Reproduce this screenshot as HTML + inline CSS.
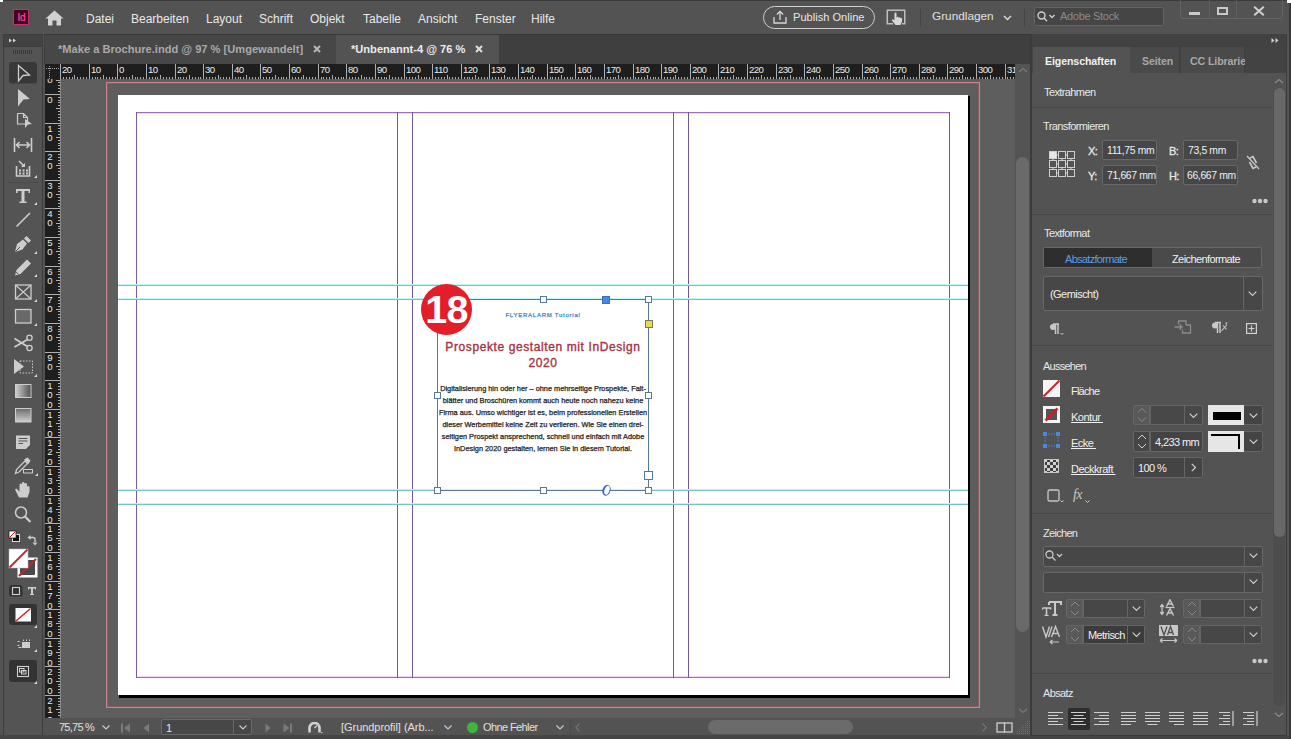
<!DOCTYPE html>
<html><head><meta charset="utf-8">
<style>
*{box-sizing:border-box;margin:0;padding:0}
html,body{width:1291px;height:739px;overflow:hidden;background:#535353;font-family:"Liberation Sans",sans-serif;color:#e0e0e0}
.a{position:absolute}
.t{position:absolute;white-space:nowrap;line-height:1}
.pt{font-size:11px;color:#e8e8e8;letter-spacing:-0.6px}
.mi{top:12.6px;font-size:12px;color:#e8e8e8;letter-spacing:0px}
</style></head><body>
<!-- MENU BAR -->
<div class="a" style="left:0;top:0;width:1291px;height:34px;background:#535353"></div>
<div class="a" style="left:0;top:0;width:1291px;height:1px;background:#3b3b3b"></div>


<!-- Id logo -->
<div class="a" style="left:13px;top:9px;width:16px;height:16px;background:#49021f;border:1px solid #b8386e"></div>
<div class="t" style="left:17.5px;top:12.5px;font-size:10px;color:#ff4aa6;letter-spacing:-0.2px;-webkit-text-stroke:0.2px #ff4aa6">Id</div>
<!-- home -->
<svg class="a" style="left:45px;top:10px" width="19" height="16" viewBox="0 0 19 16"><path d="M9.5 0.5 L0.5 8.5 L3 8.5 L3 15.5 L7.5 15.5 L7.5 10.5 L11.5 10.5 L11.5 15.5 L16 15.5 L16 8.5 L18.5 8.5 Z" fill="#d2d2d2"/></svg>
<div class="t mi" style="left:86px">Datei</div>
<div class="t mi" style="left:131px">Bearbeiten</div>
<div class="t mi" style="left:206px">Layout</div>
<div class="t mi" style="left:259px">Schrift</div>
<div class="t mi" style="left:310px">Objekt</div>
<div class="t mi" style="left:363px">Tabelle</div>
<div class="t mi" style="left:418px">Ansicht</div>
<div class="t mi" style="left:475px">Fenster</div>
<div class="t mi" style="left:531px">Hilfe</div>
<!-- publish online -->
<div class="a" style="left:763px;top:6px;width:112px;height:23px;border:1.5px solid #d0d0d0;border-radius:12px"></div>
<svg class="a" style="left:773px;top:10px" width="14" height="14" viewBox="0 0 14 14"><path d="M7 10 V1.5 M3.8 4.5 L7 1.3 L10.2 4.5 M1 7 V13 H13 V7" stroke="#d8d8d8" stroke-width="1.3" fill="none"/></svg>
<div class="t" style="left:793px;top:12px;font-size:11.1px;color:#e6e6e6">Publish Online</div>
<!-- touch icon -->
<svg class="a" style="left:886px;top:9px" width="20" height="16" viewBox="0 0 20 16"><path d="M7 14.75 H1.25 V1.25 H18.75 V14.75 H16" fill="none" stroke="#bdbdbd" stroke-width="1.5"/><path d="M8.5 4.5 A1 1 0 0 1 10.5 4.5 V9 L11 8 A1 1 0 0 1 12.5 8.5 L13 8.5 A1 1 0 0 1 14.5 9 A1 1 0 0 1 16 9.5 V12.5 L14.5 16 H9.5 L6 11.5 A1 1 0 0 1 7.5 10.5 L8.5 11.5 Z" fill="#d8d8d8"/></svg>
<div class="a" style="left:920px;top:9px;width:1px;height:18px;background:#454545"></div>
<div class="t" style="left:932px;top:11px;font-size:11.8px;color:#e0e0e0">Grundlagen</div>
<svg class="a" style="left:1003px;top:15px" width="9" height="6" viewBox="0 0 9 6"><path d="M1 1 L4.5 4.5 L8 1" stroke="#d8d8d8" stroke-width="1.5" fill="none"/></svg>
<div class="a" style="left:1024px;top:9px;width:1px;height:18px;background:#454545"></div>
<!-- search -->
<div class="a" style="left:1034px;top:7px;width:130px;height:19px;background:#454545;border:1px solid #626262;border-radius:2px"></div>
<svg class="a" style="left:1037px;top:11px" width="20" height="11" viewBox="0 0 20 11"><circle cx="4.5" cy="4.5" r="3.5" stroke="#cfcfcf" stroke-width="1.4" fill="none"/><path d="M7 7 L10 10.3 M12.5 4 L15 6.5 L17.5 4" stroke="#cfcfcf" stroke-width="1.4" fill="none"/></svg>
<div class="t" style="left:1060px;top:11px;font-size:11px;color:#8a8a8a;letter-spacing:-0.3px">Adobe Stock</div>
<!-- window controls -->
<div class="a" style="left:1180px;top:-2px;width:103px;height:21px;border:1px solid #646464;border-radius:3px"></div>
<div class="a" style="left:1209px;top:0;width:1px;height:19px;background:#5e5e5e"></div>
<div class="a" style="left:1236px;top:0;width:1px;height:19px;background:#5e5e5e"></div>
<div class="a" style="left:1189px;top:12px;width:11px;height:3px;background:#c8c8c8"></div>
<div class="a" style="left:1217px;top:7px;width:11px;height:8px;border:2px solid #c8c8c8"></div>
<svg class="a" style="left:1253px;top:6px" width="12" height="10" viewBox="0 0 12 10"><path d="M1.2 0.8 L10.8 9.2 M10.8 0.8 L1.2 9.2" stroke="#d0d0d0" stroke-width="2" fill="none"/></svg>


<!-- LEFT TOOL PANEL -->
<svg class="a" style="left:0;top:34px" width="44" height="702" viewBox="0 34 44 702">
<rect x="0" y="34" width="44" height="702" fill="#535353"/>
<rect x="3.5" y="34.5" width="39" height="701" fill="#545454" stroke="#3d3d3d"/>
<rect x="4" y="35" width="38" height="11" fill="#434343"/>
<rect x="4" y="46" width="38" height="1" fill="#3d3d3d"/>
<path d="M9 38.5 L12 40.5 L9 42.5Z M13 38.5 L16 40.5 L13 42.5Z" fill="#d0d0d0"/>
<path d="M13.5 50V54 M15.5 50V54 M17.5 50V54 M19.5 50V54 M21.5 50V54 M23.5 50V54 M25.5 50V54 M27.5 50V54 M29.5 50V54 M31.5 50V54" stroke="#3a3a3a" stroke-width="1"/>
<rect x="9" y="62" width="28" height="21.5" rx="3" fill="#383838"/>
<path d="M18.5 65.5 L29.5 75 L23 75.5 L18.5 81 Z" fill="none" stroke="#cdcdcd" stroke-width="1.3" stroke-linejoin="miter"/>
<path d="M18 89 L30 99 L23.5 99.5 L18 106.5 Z" fill="#cdcdcd"/>
<path d="M17.5 113.5 H23.5 L27.5 117.5 V121 M27.5 124 H17.5 V113.5 M23.5 113.5 V117.5 H27.5" fill="none" stroke="#cdcdcd" stroke-width="1.2"/><path d="M25 119 L32 124 L28 124.5 L25 128Z" fill="#cdcdcd"/>
<path d="M14.5 138 V152 M31.5 138 V152 M16.5 145 H29.5 M19.5 142 L16.5 145 L19.5 148 M26.5 142 L29.5 145 L26.5 148" fill="none" stroke="#cdcdcd" stroke-width="1.6"/>
<path d="M16.5 166 V176 H29.5 V166" fill="none" stroke="#cdcdcd" stroke-width="1.6"/><path d="M19 161 L24 166" stroke="#cdcdcd" stroke-width="1.6"/><path d="M25 167 L25 163 L21 167Z" fill="#cdcdcd"/><rect x="19" y="169.5" width="2" height="2" fill="#cdcdcd"/><rect x="22.5" y="169.5" width="2" height="2" fill="#cdcdcd"/><rect x="26" y="169.5" width="2" height="2" fill="#cdcdcd"/><rect x="19" y="172.5" width="2" height="2" fill="#cdcdcd"/><rect x="22.5" y="172.5" width="2" height="2" fill="#cdcdcd"/><rect x="26" y="172.5" width="2" height="2" fill="#cdcdcd"/>
<path d="M37 175 L37 178 L34 178 Z" fill="#d8d8d8"/>
<rect x="8" y="182" width="30" height="1" fill="#4a4a4a"/>
<path d="M16 189 H30 V193 H28.5 V191 H24.5 V201.5 H26.5 V203 H19.5 V201.5 H21.5 V191 H17.5 V193 H16Z" fill="#cdcdcd"/>
<path d="M37 202 L37 205 L34 205 Z" fill="#d8d8d8"/>
<path d="M16.5 226.5 L30 213" stroke="#cdcdcd" stroke-width="1.6"/>
<path d="M15 252 L17 244 L23 239.5 L27 243.5 L22.5 249.5 Z" fill="#cdcdcd"/><path d="M24 238.5 L26.5 236 L31 240.5 L28.5 243Z" fill="#cdcdcd"/><path d="M15.5 251.5 L20 247" stroke="#535353" stroke-width="1"/>
<path d="M37 251 L37 254 L34 254 Z" fill="#d8d8d8"/>
<path d="M15 275.5 L16.5 270 L27 259.5 L31 263.5 L20.5 274 Z" fill="#cdcdcd"/><path d="M16.2 272 L18.5 274.5" stroke="#535353" stroke-width="1"/>
<path d="M37 274 L37 277 L34 277 Z" fill="#d8d8d8"/>
<rect x="15.5" y="285" width="15.5" height="14" fill="none" stroke="#cdcdcd" stroke-width="1.3"/><path d="M15.5 285 L31 299 M31 285 L15.5 299" stroke="#cdcdcd" stroke-width="1.1"/>
<path d="M37 299 L37 302 L34 302 Z" fill="#d8d8d8"/>
<rect x="15.5" y="309.5" width="15.5" height="13.5" fill="#696969" stroke="#cdcdcd" stroke-width="1.3"/>
<path d="M37 323 L37 326 L34 326 Z" fill="#d8d8d8"/>
<circle cx="29.5" cy="337.8" r="2.6" fill="none" stroke="#cdcdcd" stroke-width="1.3"/><circle cx="29.5" cy="348" r="2.6" fill="none" stroke="#cdcdcd" stroke-width="1.3"/><path d="M14.5 338.5 Q20 342 27.5 346.5 M14.5 347 Q20 344 27.5 339.5" fill="none" stroke="#cdcdcd" stroke-width="1.8"/>
<path d="M14 359 L24 366.5 L14 374 Z" fill="#cdcdcd"/><rect x="20" y="361" width="12.5" height="12" fill="none" stroke="#cdcdcd" stroke-width="1" stroke-dasharray="1.5 1.5"/>
<path d="M37 374 L37 377 L34 377 Z" fill="#d8d8d8"/>
<defs><linearGradient id="g1" x1="0" x2="1" y1="0" y2="0"><stop offset="0" stop-color="#d0d0d0"/><stop offset="1" stop-color="#505050"/></linearGradient><linearGradient id="g2" x1="0" x2="0" y1="0" y2="1"><stop offset="0" stop-color="#6a6a6a"/><stop offset="1" stop-color="#d0d0d0"/></linearGradient></defs>
<rect x="15.5" y="384.5" width="15.5" height="13" fill="url(#g1)" stroke="#cdcdcd" stroke-width="1"/>
<rect x="15.5" y="408.5" width="15.5" height="13.5" fill="url(#g2)" stroke="#cdcdcd" stroke-width="1"/>
<path d="M16 435.5 H30 V445 L26 449 H16 Z" fill="#cdcdcd"/><path d="M18.5 438.5 H27.5 M18.5 441 H27.5 M18.5 443.5 H23" stroke="#535353" stroke-width="1"/><path d="M26.5 449 L30 445.5 V449Z" fill="#535353"/>
<path d="M15.5 473.5 L16.5 469.5 L25 461 L27.5 463.5 L19 472 Z" fill="none" stroke="#cdcdcd" stroke-width="1.3"/><path d="M24 459.5 L27.5 457.5 L30.5 460.5 L28.5 464 Z" fill="#cdcdcd"/><rect x="23.5" y="469.5" width="9" height="3.5" fill="none" stroke="#cdcdcd" stroke-width="1"/>
<path d="M38 473 L38 476 L35 476 Z" fill="#d8d8d8"/>
<path d="M19 497.5 L15 489.5 L16.5 488.5 L19.5 491.5 V484.5 A1.3 1.3 0 0 1 22 484.5 V489 V483 A1.3 1.3 0 0 1 24.5 483 V489 V484 A1.3 1.3 0 0 1 27 484 V490 V487 A1.3 1.3 0 0 1 29.5 487 V492 L27.5 497.5 Z" fill="#cdcdcd"/>
<circle cx="21" cy="512.5" r="5.5" fill="none" stroke="#cdcdcd" stroke-width="1.5"/><path d="M25 516.5 L30.5 522" stroke="#cdcdcd" stroke-width="2.2"/>
<rect x="12.5" y="534.5" width="7" height="7" fill="#111" stroke="#ddd" stroke-width="1"/><rect x="9" y="531" width="7" height="7" fill="#fff" stroke="#222" stroke-width="0.8"/><path d="M9.5 537.5 L15.5 531.5" stroke="#c82020" stroke-width="1"/>
<path d="M30 537.5 H33.5 Q35 537.5 35 539 V542" fill="none" stroke="#cdcdcd" stroke-width="1.4"/><path d="M27.5 537.5 L30.5 535 V540Z M35 545.5 L32.5 542.5 H37.5Z" fill="#cdcdcd"/>
<rect x="19" y="559" width="17" height="17" fill="none" stroke="#fff" stroke-width="3"/><rect x="20.5" y="560.5" width="14" height="14" fill="#4a4a4a" stroke="#222" stroke-width="0.6"/><path d="M19 576 L36 559" stroke="#c8202a" stroke-width="2.2"/>
<rect x="9" y="549" width="19" height="19" fill="#fff" stroke="#bbb" stroke-width="0.5"/><path d="M9.5 567.5 L27.5 549.5" stroke="#c8202a" stroke-width="1.8"/>
<rect x="9" y="585" width="13.5" height="11.5" rx="2.5" fill="#333"/><rect x="12.5" y="587.5" width="7" height="7" fill="none" stroke="#d0d0d0" stroke-width="1.1"/>
<path d="M28 587 H36 V589.5 H35 V588.5 H33 V594 H34 V595 H30 V594 H31 V588.5 H29 V589.5 H28Z" fill="#cdcdcd"/>
<rect x="9" y="604" width="28" height="21" rx="3" fill="#333"/><rect x="15.5" y="608" width="15.5" height="13.5" fill="#fff"/><path d="M16 621 L30.5 608.5" stroke="#d02020" stroke-width="1.4"/>
<path d="M37 625 L37 628 L34 628 Z" fill="#d8d8d8"/>
<path d="M17.5 641.5 H19.5 M17.5 645.5 H19.5 M18.5 647.5 H21.5 M23.5 639.5 V641 M26.5 639.5 V641 M29.5 639.5 V641" stroke="#cdcdcd" stroke-width="1"/><rect x="22" y="642" width="8" height="6" fill="#cdcdcd"/>
<path d="M37 649 L37 652 L34 652 Z" fill="#d8d8d8"/>
<rect x="9" y="660" width="28" height="22" rx="3" fill="#333"/><rect x="17.5" y="666.5" width="11" height="10" fill="none" stroke="#d0d0d0" stroke-width="1.1"/><rect x="19.5" y="668.5" width="4.5" height="3.5" fill="none" stroke="#d0d0d0" stroke-width="1"/><rect x="21.5" y="670.5" width="4.5" height="3.5" fill="none" stroke="#d0d0d0" stroke-width="1"/>
<path d="M37 681 L37 684 L34 684 Z" fill="#d8d8d8"/>
</svg>

<!-- DOC TAB BAR -->
<div class="a" style="left:44px;top:34px;width:987px;height:30px;background:#3f3f3f"></div>


<div class="a" style="left:44px;top:34px;width:987px;height:1px;background:#383838"></div>
<div class="a" style="left:45px;top:35px;width:291px;height:29px;background:#474747"></div>
<div class="t" style="left:58px;top:44px;font-size:11.1px;font-weight:bold;color:#a9a9a9">*Make a Brochure.indd @ 97 % [Umgewandelt]</div>
<svg class="a" style="left:313px;top:45px" width="8" height="8" viewBox="0 0 8 8"><path d="M1 1 L7 7 M7 1 L1 7" stroke="#b8b8b8" stroke-width="2"/></svg>
<div class="a" style="left:336px;top:35px;width:163px;height:29px;background:#535353"></div>
<div class="t" style="left:351px;top:44px;font-size:11.1px;font-weight:bold;color:#ececec">*Unbenannt-4 @ 76 %</div>
<svg class="a" style="left:475px;top:45px" width="8" height="8" viewBox="0 0 8 8"><path d="M1 1 L7 7 M7 1 L1 7" stroke="#e0e0e0" stroke-width="2"/></svg>

<!-- RULERS -->
<svg class="a" style="left:45px;top:64px" width="970" height="16" viewBox="0 0 970 16"><rect x="0" y="0" width="970" height="16" fill="#1e1e1e"/><path d="M4.5 2V15 M1 4.5H15" stroke="#a0a0a0" stroke-width="1" stroke-dasharray="1 1"/><path d="M15.5 0V15 M18.5 13V15 M21.5 13V15 M24.5 13V15 M27.5 13V15 M29.5 11V15 M32.5 13V15 M35.5 13V15 M38.5 13V15 M41.5 13V15 M44.5 0V15 M47.5 13V15 M50.5 13V15 M52.5 13V15 M55.5 13V15 M58.5 11V15 M61.5 13V15 M64.5 13V15 M67.5 13V15 M70.5 13V15 M72.5 0V15 M75.5 13V15 M78.5 13V15 M81.5 13V15 M84.5 13V15 M87.5 11V15 M90.5 13V15 M92.5 13V15 M95.5 13V15 M98.5 13V15 M101.5 0V15 M104.5 13V15 M107.5 13V15 M110.5 13V15 M112.5 13V15 M115.5 11V15 M118.5 13V15 M121.5 13V15 M124.5 13V15 M127.5 13V15 M130.5 0V15 M133.5 13V15 M135.5 13V15 M138.5 13V15 M141.5 13V15 M144.5 11V15 M147.5 13V15 M150.5 13V15 M153.5 13V15 M155.5 13V15 M158.5 0V15 M161.5 13V15 M164.5 13V15 M167.5 13V15 M170.5 13V15 M173.5 11V15 M175.5 13V15 M178.5 13V15 M181.5 13V15 M184.5 13V15 M187.5 0V15 M190.5 13V15 M193.5 13V15 M195.5 13V15 M198.5 13V15 M201.5 11V15 M204.5 13V15 M207.5 13V15 M210.5 13V15 M213.5 13V15 M215.5 0V15 M218.5 13V15 M221.5 13V15 M224.5 13V15 M227.5 13V15 M230.5 11V15 M233.5 13V15 M236.5 13V15 M238.5 13V15 M241.5 13V15 M244.5 0V15 M247.5 13V15 M250.5 13V15 M253.5 13V15 M256.5 13V15 M258.5 11V15 M261.5 13V15 M264.5 13V15 M267.5 13V15 M270.5 13V15 M273.5 0V15 M276.5 13V15 M278.5 13V15 M281.5 13V15 M284.5 13V15 M287.5 11V15 M290.5 13V15 M293.5 13V15 M296.5 13V15 M298.5 13V15 M301.5 0V15 M304.5 13V15 M307.5 13V15 M310.5 13V15 M313.5 13V15 M316.5 11V15 M319.5 13V15 M321.5 13V15 M324.5 13V15 M327.5 13V15 M330.5 0V15 M333.5 13V15 M336.5 13V15 M339.5 13V15 M341.5 13V15 M344.5 11V15 M347.5 13V15 M350.5 13V15 M353.5 13V15 M356.5 13V15 M359.5 0V15 M361.5 13V15 M364.5 13V15 M367.5 13V15 M370.5 13V15 M373.5 11V15 M376.5 13V15 M379.5 13V15 M381.5 13V15 M384.5 13V15 M387.5 0V15 M390.5 13V15 M393.5 13V15 M396.5 13V15 M399.5 13V15 M402.5 11V15 M404.5 13V15 M407.5 13V15 M410.5 13V15 M413.5 13V15 M416.5 0V15 M419.5 13V15 M422.5 13V15 M424.5 13V15 M427.5 13V15 M430.5 11V15 M433.5 13V15 M436.5 13V15 M439.5 13V15 M442.5 13V15 M444.5 0V15 M447.5 13V15 M450.5 13V15 M453.5 13V15 M456.5 13V15 M459.5 11V15 M462.5 13V15 M464.5 13V15 M467.5 13V15 M470.5 13V15 M473.5 0V15 M476.5 13V15 M479.5 13V15 M482.5 13V15 M485.5 13V15 M487.5 11V15 M490.5 13V15 M493.5 13V15 M496.5 13V15 M499.5 13V15 M502.5 0V15 M505.5 13V15 M507.5 13V15 M510.5 13V15 M513.5 13V15 M516.5 11V15 M519.5 13V15 M522.5 13V15 M525.5 13V15 M527.5 13V15 M530.5 0V15 M533.5 13V15 M536.5 13V15 M539.5 13V15 M542.5 13V15 M545.5 11V15 M547.5 13V15 M550.5 13V15 M553.5 13V15 M556.5 13V15 M559.5 0V15 M562.5 13V15 M565.5 13V15 M568.5 13V15 M570.5 13V15 M573.5 11V15 M576.5 13V15 M579.5 13V15 M582.5 13V15 M585.5 13V15 M588.5 0V15 M590.5 13V15 M593.5 13V15 M596.5 13V15 M599.5 13V15 M602.5 11V15 M605.5 13V15 M608.5 13V15 M610.5 13V15 M613.5 13V15 M616.5 0V15 M619.5 13V15 M622.5 13V15 M625.5 13V15 M628.5 13V15 M630.5 11V15 M633.5 13V15 M636.5 13V15 M639.5 13V15 M642.5 13V15 M645.5 0V15 M648.5 13V15 M651.5 13V15 M653.5 13V15 M656.5 13V15 M659.5 11V15 M662.5 13V15 M665.5 13V15 M668.5 13V15 M671.5 13V15 M673.5 0V15 M676.5 13V15 M679.5 13V15 M682.5 13V15 M685.5 13V15 M688.5 11V15 M691.5 13V15 M693.5 13V15 M696.5 13V15 M699.5 13V15 M702.5 0V15 M705.5 13V15 M708.5 13V15 M711.5 13V15 M713.5 13V15 M716.5 11V15 M719.5 13V15 M722.5 13V15 M725.5 13V15 M728.5 13V15 M731.5 0V15 M734.5 13V15 M736.5 13V15 M739.5 13V15 M742.5 13V15 M745.5 11V15 M748.5 13V15 M751.5 13V15 M754.5 13V15 M756.5 13V15 M759.5 0V15 M762.5 13V15 M765.5 13V15 M768.5 13V15 M771.5 13V15 M774.5 11V15 M776.5 13V15 M779.5 13V15 M782.5 13V15 M785.5 13V15 M788.5 0V15 M791.5 13V15 M794.5 13V15 M796.5 13V15 M799.5 13V15 M802.5 11V15 M805.5 13V15 M808.5 13V15 M811.5 13V15 M814.5 13V15 M817.5 0V15 M819.5 13V15 M822.5 13V15 M825.5 13V15 M828.5 13V15 M831.5 11V15 M834.5 13V15 M837.5 13V15 M839.5 13V15 M842.5 13V15 M845.5 0V15 M848.5 13V15 M851.5 13V15 M854.5 13V15 M857.5 13V15 M859.5 11V15 M862.5 13V15 M865.5 13V15 M868.5 13V15 M871.5 13V15 M874.5 0V15 M877.5 13V15 M879.5 13V15 M882.5 13V15 M885.5 13V15 M888.5 11V15 M891.5 13V15 M894.5 13V15 M897.5 13V15 M900.5 13V15 M902.5 0V15 M905.5 13V15 M908.5 13V15 M911.5 13V15 M914.5 13V15 M917.5 11V15 M920.5 13V15 M922.5 13V15 M925.5 13V15 M928.5 13V15 M931.5 0V15 M934.5 13V15 M937.5 13V15 M940.5 13V15 M942.5 13V15 M945.5 11V15 M948.5 13V15 M951.5 13V15 M954.5 13V15 M957.5 13V15 M960.5 0V15 M962.5 13V15 M965.5 13V15 M968.5 13V15" stroke="#b0b0b0" stroke-width="1"/><rect x="0" y="15" width="970" height="1" fill="#8c8c8c"/><g font-family="Liberation Sans" font-size="9.6" letter-spacing="-0.55" fill="#ececec"><text x="17" y="9.2" >20</text><text x="46" y="9.2" >10</text><text x="74" y="9.2" >0</text><text x="103" y="9.2" >10</text><text x="132" y="9.2" >20</text><text x="160" y="9.2" >30</text><text x="189" y="9.2" >40</text><text x="217" y="9.2" >50</text><text x="246" y="9.2" >60</text><text x="275" y="9.2" >70</text><text x="303" y="9.2" >80</text><text x="332" y="9.2" >90</text><text x="361" y="9.2" >100</text><text x="389" y="9.2" >110</text><text x="418" y="9.2" >120</text><text x="446" y="9.2" >130</text><text x="475" y="9.2" >140</text><text x="504" y="9.2" >150</text><text x="532" y="9.2" >160</text><text x="561" y="9.2" >170</text><text x="590" y="9.2" >180</text><text x="618" y="9.2" >190</text><text x="647" y="9.2" >200</text><text x="675" y="9.2" >210</text><text x="704" y="9.2" >220</text><text x="733" y="9.2" >230</text><text x="761" y="9.2" >240</text><text x="790" y="9.2" >250</text><text x="819" y="9.2" >260</text><text x="847" y="9.2" >270</text><text x="876" y="9.2" >280</text><text x="904" y="9.2" >290</text><text x="933" y="9.2" >300</text><text x="962" y="9.2" >310</text></g></svg>
<svg class="a" style="left:45px;top:79px" width="16" height="639" viewBox="0 0 16 639"><rect x="0" y="0" width="16" height="639" fill="#1e1e1e"/><path d="M13 -18.5H15 M13 -16.5H15 M0 -13.5H15 M13 -10.5H15 M13 -7.5H15 M13 -4.5H15 M13 -1.5H15 M11 1.5H15 M13 3.5H15 M13 6.5H15 M13 9.5H15 M13 12.5H15 M0 15.5H15 M13 18.5H15 M13 21.5H15 M13 23.5H15 M13 26.5H15 M11 29.5H15 M13 32.5H15 M13 35.5H15 M13 38.5H15 M13 41.5H15 M0 44.5H15 M13 46.5H15 M13 49.5H15 M13 52.5H15 M13 55.5H15 M11 58.5H15 M13 61.5H15 M13 64.5H15 M13 66.5H15 M13 69.5H15 M0 72.5H15 M13 75.5H15 M13 78.5H15 M13 81.5H15 M13 84.5H15 M11 86.5H15 M13 89.5H15 M13 92.5H15 M13 95.5H15 M13 98.5H15 M0 101.5H15 M13 104.5H15 M13 107.5H15 M13 109.5H15 M13 112.5H15 M11 115.5H15 M13 118.5H15 M13 121.5H15 M13 124.5H15 M13 127.5H15 M0 129.5H15 M13 132.5H15 M13 135.5H15 M13 138.5H15 M13 141.5H15 M11 144.5H15 M13 147.5H15 M13 149.5H15 M13 152.5H15 M13 155.5H15 M0 158.5H15 M13 161.5H15 M13 164.5H15 M13 167.5H15 M13 169.5H15 M11 172.5H15 M13 175.5H15 M13 178.5H15 M13 181.5H15 M13 184.5H15 M0 187.5H15 M13 190.5H15 M13 192.5H15 M13 195.5H15 M13 198.5H15 M11 201.5H15 M13 204.5H15 M13 207.5H15 M13 210.5H15 M13 212.5H15 M0 215.5H15 M13 218.5H15 M13 221.5H15 M13 224.5H15 M13 227.5H15 M11 230.5H15 M13 232.5H15 M13 235.5H15 M13 238.5H15 M13 241.5H15 M0 244.5H15 M13 247.5H15 M13 250.5H15 M13 252.5H15 M13 255.5H15 M11 258.5H15 M13 261.5H15 M13 264.5H15 M13 267.5H15 M13 270.5H15 M0 273.5H15 M13 275.5H15 M13 278.5H15 M13 281.5H15 M13 284.5H15 M11 287.5H15 M13 290.5H15 M13 293.5H15 M13 295.5H15 M13 298.5H15 M0 301.5H15 M13 304.5H15 M13 307.5H15 M13 310.5H15 M13 313.5H15 M11 315.5H15 M13 318.5H15 M13 321.5H15 M13 324.5H15 M13 327.5H15 M0 330.5H15 M13 333.5H15 M13 336.5H15 M13 338.5H15 M13 341.5H15 M11 344.5H15 M13 347.5H15 M13 350.5H15 M13 353.5H15 M13 356.5H15 M0 358.5H15 M13 361.5H15 M13 364.5H15 M13 367.5H15 M13 370.5H15 M11 373.5H15 M13 376.5H15 M13 378.5H15 M13 381.5H15 M13 384.5H15 M0 387.5H15 M13 390.5H15 M13 393.5H15 M13 396.5H15 M13 398.5H15 M11 401.5H15 M13 404.5H15 M13 407.5H15 M13 410.5H15 M13 413.5H15 M0 416.5H15 M13 419.5H15 M13 421.5H15 M13 424.5H15 M13 427.5H15 M11 430.5H15 M13 433.5H15 M13 436.5H15 M13 439.5H15 M13 441.5H15 M0 444.5H15 M13 447.5H15 M13 450.5H15 M13 453.5H15 M13 456.5H15 M11 459.5H15 M13 461.5H15 M13 464.5H15 M13 467.5H15 M13 470.5H15 M0 473.5H15 M13 476.5H15 M13 479.5H15 M13 481.5H15 M13 484.5H15 M11 487.5H15 M13 490.5H15 M13 493.5H15 M13 496.5H15 M13 499.5H15 M0 502.5H15 M13 504.5H15 M13 507.5H15 M13 510.5H15 M13 513.5H15 M11 516.5H15 M13 519.5H15 M13 522.5H15 M13 524.5H15 M13 527.5H15 M0 530.5H15 M13 533.5H15 M13 536.5H15 M13 539.5H15 M13 542.5H15 M11 544.5H15 M13 547.5H15 M13 550.5H15 M13 553.5H15 M13 556.5H15 M0 559.5H15 M13 562.5H15 M13 564.5H15 M13 567.5H15 M13 570.5H15 M11 573.5H15 M13 576.5H15 M13 579.5H15 M13 582.5H15 M13 585.5H15 M0 587.5H15 M13 590.5H15 M13 593.5H15 M13 596.5H15 M13 599.5H15 M11 602.5H15 M13 605.5H15 M13 607.5H15 M13 610.5H15 M13 613.5H15 M0 616.5H15 M13 619.5H15 M13 622.5H15 M13 625.5H15 M13 627.5H15 M11 630.5H15 M13 633.5H15 M13 636.5H15" stroke="#b0b0b0" stroke-width="1"/><rect x="15" y="0" width="1" height="639" fill="#8c8c8c"/><g font-family="Liberation Sans" font-size="9.6" fill="#ececec"><text x="2.3" y="-4.800000000000001">1</text><text x="2.3" y="4.399999999999999">0</text><text x="2.3" y="24.2">0</text><text x="2.3" y="53.2">1</text><text x="2.3" y="62.400000000000006">0</text><text x="2.3" y="81.2">2</text><text x="2.3" y="90.4">0</text><text x="2.3" y="110.2">3</text><text x="2.3" y="119.4">0</text><text x="2.3" y="138.2">4</text><text x="2.3" y="147.39999999999998">0</text><text x="2.3" y="167.2">5</text><text x="2.3" y="176.39999999999998">0</text><text x="2.3" y="196.2">6</text><text x="2.3" y="205.39999999999998">0</text><text x="2.3" y="224.2">7</text><text x="2.3" y="233.39999999999998">0</text><text x="2.3" y="253.2">8</text><text x="2.3" y="262.4">0</text><text x="2.3" y="282.2">9</text><text x="2.3" y="291.4">0</text><text x="2.3" y="310.2">1</text><text x="2.3" y="319.4">0</text><text x="2.3" y="328.59999999999997">0</text><text x="2.3" y="339.2">1</text><text x="2.3" y="348.4">1</text><text x="2.3" y="357.59999999999997">0</text><text x="2.3" y="367.2">1</text><text x="2.3" y="376.4">2</text><text x="2.3" y="385.59999999999997">0</text><text x="2.3" y="396.2">1</text><text x="2.3" y="405.4">3</text><text x="2.3" y="414.59999999999997">0</text><text x="2.3" y="425.2">1</text><text x="2.3" y="434.4">4</text><text x="2.3" y="443.59999999999997">0</text><text x="2.3" y="453.2">1</text><text x="2.3" y="462.4">5</text><text x="2.3" y="471.59999999999997">0</text><text x="2.3" y="482.2">1</text><text x="2.3" y="491.4">6</text><text x="2.3" y="500.59999999999997">0</text><text x="2.3" y="511.2">1</text><text x="2.3" y="520.4">7</text><text x="2.3" y="529.6">0</text><text x="2.3" y="539.2">1</text><text x="2.3" y="548.4000000000001">8</text><text x="2.3" y="557.6">0</text><text x="2.3" y="568.2">1</text><text x="2.3" y="577.4000000000001">9</text><text x="2.3" y="586.6">0</text><text x="2.3" y="596.2">2</text><text x="2.3" y="605.4000000000001">0</text><text x="2.3" y="614.6">0</text><text x="2.3" y="625.2">2</text><text x="2.3" y="634.4000000000001">1</text><text x="2.3" y="643.6">0</text></g></svg>

<!-- CANVAS -->
<div class="a" id="canvas" style="left:61px;top:79px;width:954px;height:639px;background:#5e5e5e;overflow:hidden"></div>


<!-- PAGE -->
<div class="a" style="left:106px;top:82px;width:874px;height:626px;border:1px solid #c98890"></div>
<div class="a" style="left:107px;top:83px;width:872px;height:624px;border:1px solid #8c5a62"></div>
<div class="a" style="left:119px;top:96px;width:851px;height:602px;background:#000"></div>
<div class="a" style="left:118px;top:95px;width:850px;height:600px;background:#fff"></div>
<!-- margins -->
<div class="a" style="left:136px;top:112px;width:814px;height:1px;background:#a66cbc"></div>
<div class="a" style="left:137px;top:113px;width:812px;height:1px;background:#f2d6f2"></div>
<div class="a" style="left:136px;top:677px;width:814px;height:1px;background:#a66cbc"></div>
<div class="a" style="left:137px;top:676px;width:812px;height:1px;background:#f2d6f2"></div>
<div class="a" style="left:136px;top:112px;width:1px;height:566px;background:#7c5ca4"></div>
<div class="a" style="left:949px;top:112px;width:1px;height:566px;background:#6e5a92"></div>
<!-- columns -->
<div class="a" style="left:397px;top:112px;width:1px;height:566px;background:#70589a"></div>
<div class="a" style="left:412px;top:112px;width:1px;height:566px;background:#70589a"></div>
<div class="a" style="left:673px;top:112px;width:1px;height:566px;background:#70589a"></div>
<div class="a" style="left:688px;top:112px;width:1px;height:566px;background:#70589a"></div>
<!-- cyan guides -->
<div class="a" style="left:118px;top:284px;width:850px;height:1px;background:#bff8fa"></div>
<div class="a" style="left:118px;top:285px;width:850px;height:1px;background:#72c2c6"></div>
<div class="a" style="left:118px;top:298px;width:850px;height:1px;background:#bff8fa"></div>
<div class="a" style="left:118px;top:299px;width:850px;height:1px;background:#72c2c6"></div>
<div class="a" style="left:118px;top:489px;width:850px;height:1px;background:#bff8fa"></div>
<div class="a" style="left:118px;top:490px;width:850px;height:1px;background:#72c2c6"></div>
<div class="a" style="left:118px;top:503px;width:850px;height:1px;background:#bff8fa"></div>
<div class="a" style="left:118px;top:504px;width:850px;height:1px;background:#72c2c6"></div>


<!-- TEXT FRAME -->
<div class="a" style="left:437px;top:299px;width:212px;height:192px;border:1px solid #5878a0"></div>
<div class="t" style="left:437px;top:312px;width:212px;text-align:center;font-size:6px;color:#3d88c0;letter-spacing:0.75px;-webkit-text-stroke:0.25px #3d88c0">FLYERALARM Tutorial</div>
<div class="t" style="left:437px;top:339px;width:212px;text-align:center;font-size:12px;color:#a8303e;letter-spacing:0.6px;line-height:16px;white-space:normal;-webkit-text-stroke:0.35px #a8303e">Prospekte gestalten mit InDesign<br>2020</div>
<div class="t" style="left:437px;top:382.8px;width:212px;text-align:center;font-size:7.35px;color:#222;line-height:12.1px;-webkit-text-stroke:0.25px #222">Digitalisierung hin oder her – ohne mehrseitige Prospekte, Falt-<br>blätter und Broschüren kommt auch heute noch nahezu keine<br>Firma aus. Umso wichtiger ist es, beim professionellen Erstellen<br>dieser Werbemittel keine Zeit zu verlieren. Wie Sie einen drei-<br>seitigen Prospekt ansprechend, schnell und einfach mit Adobe<br>InDesign 2020 gestalten, lernen Sie in diesem Tutorial.</div>
<!-- handles -->
<div class="a" style="left:434px;top:296px;width:7px;height:7px;border:1px solid #5878a0;background:#fff"></div>
<div class="a" style="left:540px;top:296px;width:7px;height:7px;border:1px solid #5878a0;background:#fff"></div>
<div class="a" style="left:645px;top:296px;width:7px;height:7px;border:1px solid #5878a0;background:#fff"></div>
<div class="a" style="left:602px;top:296px;width:8px;height:8px;background:#4a88e8;border:1px solid #3a70c0"></div>
<div class="a" style="left:645px;top:320px;width:8px;height:8px;background:#e8dc48;border:1px solid #7a7a50"></div>
<div class="a" style="left:434px;top:392px;width:7px;height:7px;border:1px solid #5878a0;background:#fff"></div>
<div class="a" style="left:645px;top:392px;width:7px;height:7px;border:1px solid #5878a0;background:#fff"></div>
<div class="a" style="left:644px;top:471px;width:9px;height:9px;border:1px solid #5878a0;background:#fff"></div>
<div class="a" style="left:434px;top:487px;width:7px;height:7px;border:1px solid #5878a0;background:#fff"></div>
<div class="a" style="left:540px;top:487px;width:7px;height:7px;border:1px solid #5878a0;background:#fff"></div>
<div class="a" style="left:645px;top:487px;width:7px;height:7px;border:1px solid #5878a0;background:#fff"></div>
<svg class="a" style="left:600px;top:484px" width="13" height="13" viewBox="0 0 13 13"><ellipse cx="6.5" cy="6.2" rx="4" ry="5.6" transform="rotate(20 6.5 6.2)" fill="#3d6ac8"/><ellipse cx="7" cy="6" rx="2.4" ry="4.6" transform="rotate(20 6.5 6.2)" fill="#fff"/></svg>
<!-- badge 18 -->
<div class="a" style="left:421px;top:284px;width:51px;height:51px;border-radius:50%;background:#e31e2a"></div>
<div class="t" style="left:421px;top:290px;width:51px;text-align:center;font-size:39.5px;font-weight:bold;color:#fff;letter-spacing:-0.8px">18</div>

<!-- V SCROLLBAR -->
<div class="a" style="left:1015px;top:64px;width:15px;height:654px;background:#545454"></div>
<svg class="a" style="left:1018px;top:67px" width="10" height="6" viewBox="0 0 10 6"><path d="M1 5 L5 1.5 L9 5" stroke="#7a7a7a" stroke-width="1.2" fill="none"/></svg>
<div class="a" style="left:1016px;top:157px;width:13px;height:475px;background:#6a6a6a;border-radius:6.5px"></div>
<svg class="a" style="left:1018px;top:708px" width="10" height="6" viewBox="0 0 10 6"><path d="M1 1 L5 4.5 L9 1" stroke="#7a7a7a" stroke-width="1.2" fill="none"/></svg>
<div class="a" style="left:1030px;top:34px;width:2px;height:702px;background:#3b3b3b"></div>

<!-- STATUS BAR -->
<div class="a" style="left:44px;top:718px;width:986px;height:17px;background:#535353"></div>
<div class="a" style="left:0;top:735px;width:1291px;height:4px;background:#454545"></div>
<div class="t" style="left:59px;top:722px;font-size:11px;color:#e0e0e0;letter-spacing:-0.75px">75,75 %</div>
<svg class="a" style="left:102px;top:725px" width="8" height="5" viewBox="0 0 8 5"><path d="M0.5 0.5 L4 4 L7.5 0.5" stroke="#cfcfcf" stroke-width="1.1" fill="none"/></svg>
<svg class="a" style="left:121px;top:723px" width="10" height="10" viewBox="0 0 10 10"><rect x="0" y="0.5" width="2" height="9" fill="#7a7a7a"/><path d="M9 0.5 V9.5 L3 5Z" fill="#7a7a7a"/></svg>
<svg class="a" style="left:143px;top:723px" width="7" height="10" viewBox="0 0 7 10"><path d="M6 0.5 V9.5 L0.5 5Z" fill="#7a7a7a"/></svg>
<div class="a" style="left:161px;top:719px;width:91px;height:16px;background:#474747;border:1px solid #6a6a6a;border-radius:2px"></div>
<div class="a" style="left:233px;top:720px;width:1px;height:14px;background:#6a6a6a"></div>
<div class="t" style="left:166px;top:723px;font-size:11px;color:#e8e8e8">1</div>
<svg class="a" style="left:239px;top:725px" width="8" height="5" viewBox="0 0 8 5"><path d="M0.5 0.5 L4 4 L7.5 0.5" stroke="#cfcfcf" stroke-width="1.1" fill="none"/></svg>
<svg class="a" style="left:265px;top:723px" width="6" height="10" viewBox="0 0 6 10"><path d="M0.5 0.5 V9.5 L5.5 5Z" fill="#7a7a7a"/></svg>
<svg class="a" style="left:283px;top:723px" width="10" height="10" viewBox="0 0 10 10"><path d="M0.5 0.5 V9.5 L6.5 5Z" fill="#7a7a7a"/><rect x="7" y="0.5" width="2" height="9" fill="#7a7a7a"/></svg>
<svg class="a" style="left:308px;top:722px" width="16" height="12" viewBox="0 0 16 12"><path d="M1.5 10.5 V6 A5 5 0 0 1 11.5 6 V10.5" fill="none" stroke="#d0d0d0" stroke-width="2.6"/><path d="M6.5 6 L9 3.5" stroke="#d0d0d0" stroke-width="1.4"/><path d="M12.5 10 L15 10 L13.75 11.5Z" fill="#bbb"/></svg>
<div class="t" style="left:341px;top:722px;font-size:11px;color:#e0e0e0;letter-spacing:-0.05px">[Grundprofil] (Arb...</div>
<svg class="a" style="left:444px;top:725px" width="8" height="5" viewBox="0 0 8 5"><path d="M0.5 0.5 L4 4 L7.5 0.5" stroke="#cfcfcf" stroke-width="1.1" fill="none"/></svg>
<div class="a" style="left:467px;top:722px;width:11px;height:11px;border-radius:50%;background:#3fb43f"></div>
<div class="t" style="left:483px;top:722px;font-size:11px;color:#e0e0e0;letter-spacing:-0.6px">Ohne Fehler</div>
<svg class="a" style="left:556px;top:725px" width="8" height="5" viewBox="0 0 8 5"><path d="M0.5 0.5 L4 4 L7.5 0.5" stroke="#cfcfcf" stroke-width="1.1" fill="none"/></svg>
<div class="a" style="left:570px;top:718px;width:1px;height:17px;background:#4a4a4a"></div>
<svg class="a" style="left:575px;top:723px" width="5" height="9" viewBox="0 0 5 9"><path d="M4.5 0.5 L1 4.5 L4.5 8.5" stroke="#7a7a7a" stroke-width="1.1" fill="none"/></svg>
<div class="a" style="left:708px;top:720px;width:145px;height:14px;background:#6b6b6b;border-radius:7px"></div>
<svg class="a" style="left:982px;top:723px" width="5" height="9" viewBox="0 0 5 9"><path d="M0.5 0.5 L4 4.5 L0.5 8.5" stroke="#7a7a7a" stroke-width="1.1" fill="none"/></svg>
<svg class="a" style="left:996px;top:722px" width="17" height="11" viewBox="0 0 17 11"><rect x="1" y="1" width="15" height="9" fill="none" stroke="#cfcfcf" stroke-width="1.3"/><path d="M8.5 0.5 V10.5" stroke="#cfcfcf" stroke-width="1.3"/></svg>

<svg class="a" style="left:1016px;top:720px" width="14" height="14" viewBox="0 0 14 14"><rect x="1" y="11" width="1" height="1" fill="#6e6e6e"/><rect x="1" y="13" width="1" height="1" fill="#6e6e6e"/><rect x="3" y="9" width="1" height="1" fill="#6e6e6e"/><rect x="3" y="11" width="1" height="1" fill="#6e6e6e"/><rect x="3" y="13" width="1" height="1" fill="#6e6e6e"/><rect x="5" y="7" width="1" height="1" fill="#6e6e6e"/><rect x="5" y="9" width="1" height="1" fill="#6e6e6e"/><rect x="5" y="11" width="1" height="1" fill="#6e6e6e"/><rect x="5" y="13" width="1" height="1" fill="#6e6e6e"/><rect x="7" y="5" width="1" height="1" fill="#6e6e6e"/><rect x="7" y="7" width="1" height="1" fill="#6e6e6e"/><rect x="7" y="9" width="1" height="1" fill="#6e6e6e"/><rect x="7" y="11" width="1" height="1" fill="#6e6e6e"/><rect x="7" y="13" width="1" height="1" fill="#6e6e6e"/><rect x="9" y="3" width="1" height="1" fill="#6e6e6e"/><rect x="9" y="5" width="1" height="1" fill="#6e6e6e"/><rect x="9" y="7" width="1" height="1" fill="#6e6e6e"/><rect x="9" y="9" width="1" height="1" fill="#6e6e6e"/><rect x="9" y="11" width="1" height="1" fill="#6e6e6e"/><rect x="9" y="13" width="1" height="1" fill="#6e6e6e"/><rect x="11" y="1" width="1" height="1" fill="#6e6e6e"/><rect x="11" y="3" width="1" height="1" fill="#6e6e6e"/><rect x="11" y="5" width="1" height="1" fill="#6e6e6e"/><rect x="11" y="7" width="1" height="1" fill="#6e6e6e"/><rect x="11" y="9" width="1" height="1" fill="#6e6e6e"/><rect x="11" y="11" width="1" height="1" fill="#6e6e6e"/><rect x="11" y="13" width="1" height="1" fill="#6e6e6e"/><rect x="13" y="1" width="1" height="1" fill="#6e6e6e"/><rect x="13" y="3" width="1" height="1" fill="#6e6e6e"/><rect x="13" y="5" width="1" height="1" fill="#6e6e6e"/><rect x="13" y="7" width="1" height="1" fill="#6e6e6e"/><rect x="13" y="9" width="1" height="1" fill="#6e6e6e"/><rect x="13" y="11" width="1" height="1" fill="#6e6e6e"/><rect x="13" y="13" width="1" height="1" fill="#6e6e6e"/></svg>
<!-- RIGHT PANEL -->
<div class="a" style="left:1032px;top:34px;width:256px;height:702px;background:#535353"></div>
<div class="a" style="left:1032px;top:34px;width:256px;height:13px;background:#424242"></div>
<svg class="a" style="left:1271px;top:38px" width="9" height="5" viewBox="0 0 9 5"><path d="M0.5 0 L3.5 2.5 L0.5 5Z M4.5 0 L7.5 2.5 L4.5 5Z" fill="#d0d0d0"/></svg>
<div class="a" style="left:1032px;top:47px;width:256px;height:26px;background:#434343"></div>
<div class="a" style="left:1130px;top:47px;width:50px;height:26px;background:#4a4a4a;border-right:1px solid #3e3e3e"></div>
<div class="a" style="left:1181px;top:47px;width:64px;height:26px;background:#4a4a4a;border-right:1px solid #3e3e3e"></div>
<div class="a" style="left:1033px;top:47px;width:97px;height:27px;background:#535353"></div>
<div class="t pt" style="left:1045px;top:56px;font-weight:bold;font-size:10.6px;color:#f0f0f0;letter-spacing:-0.1px">Eigenschaften</div>
<div class="t pt" style="left:1142px;top:56px;font-weight:bold;font-size:10.6px;color:#a8a8a8;letter-spacing:-0.1px">Seiten</div>
<div class="a" style="left:1181px;top:47px;width:64px;height:26px;overflow:hidden"><div class="t" style="left:9px;top:9px;font-weight:bold;font-size:10.6px;color:#a8a8a8;letter-spacing:-0.1px">CC Libraries</div></div>
<div class="a" style="left:1272px;top:73px;width:15px;height:662px;background:#535353"></div>
<div class="a" style="left:1273px;top:88px;width:12px;height:618px;background:#4d4d4d;border-radius:6px"></div>
<svg class="a" style="left:1274px;top:78px" width="10" height="6" viewBox="0 0 10 6"><path d="M1 5 L5 1.5 L9 5" stroke="#8a8a8a" stroke-width="1.2" fill="none"/></svg>
<div class="a" style="left:1274px;top:88px;width:11px;height:449px;background:#686868;border-radius:5.5px"></div>
<svg class="a" style="left:1274px;top:712px" width="10" height="6" viewBox="0 0 10 6"><path d="M1 1 L5 4.5 L9 1" stroke="#8a8a8a" stroke-width="1.2" fill="none"/></svg>
<div class="a" style="left:1286px;top:34px;width:1px;height:702px;background:#3a3a3a"></div>
<div class="a" style="left:1031px;top:735px;width:257px;height:1px;background:#3a3a3a"></div>
<div class="t pt" style="left:1044px;top:87px;">Textrahmen</div>
<div class="a" style="left:1032px;top:107px;width:240px;height:1px;background:#474747"></div>
<div class="t pt" style="left:1043px;top:121px;">Transformieren</div>
<svg class="a" style="left:1049px;top:151px" width="27" height="26" viewBox="0 0 27 26"><rect x="0.5" y="0.5" width="7" height="7" fill="#e8e8e8" stroke="#d0d0d0" stroke-width="1"/><rect x="9.5" y="0.5" width="7" height="7" fill="none" stroke="#d0d0d0" stroke-width="1"/><rect x="18.5" y="0.5" width="7" height="7" fill="none" stroke="#d0d0d0" stroke-width="1"/><rect x="0.5" y="9.5" width="7" height="7" fill="none" stroke="#d0d0d0" stroke-width="1"/><rect x="9.5" y="9.5" width="7" height="7" fill="none" stroke="#d0d0d0" stroke-width="1"/><rect x="18.5" y="9.5" width="7" height="7" fill="none" stroke="#d0d0d0" stroke-width="1"/><rect x="0.5" y="18.5" width="7" height="7" fill="none" stroke="#d0d0d0" stroke-width="1"/><rect x="9.5" y="18.5" width="7" height="7" fill="none" stroke="#d0d0d0" stroke-width="1"/><rect x="18.5" y="18.5" width="7" height="7" fill="none" stroke="#d0d0d0" stroke-width="1"/><path d="M7.5 4 H9.5 M16.5 4 H18.5 M7.5 13 H9.5 M16.5 13 H18.5 M7.5 22 H9.5 M16.5 22 H18.5 M4 7.5 V9.5 M13 7.5 V9.5 M22 7.5 V9.5 M4 16.5 V18.5 M13 16.5 V18.5 M22 16.5 V18.5" stroke="#d0d0d0" stroke-width="1"/></svg>
<div class="t pt" style="left:1088px;top:146px;font-size:11px;-webkit-text-stroke:0.3px #e8e8e8">X:</div>
<div class="a" style="left:1102px;top:140px;width:55px;height:20px;background:#464646;border:1px solid #686868;border-radius:2px;"></div>
<div class="t pt" style="left:1107px;top:146px;font-size:10.4px;color:#f0f0f0;letter-spacing:-0.35px">111,75 mm</div>
<div class="t pt" style="left:1169px;top:146px;font-size:11px;-webkit-text-stroke:0.3px #e8e8e8">B:</div>
<div class="a" style="left:1183px;top:140px;width:55px;height:20px;background:#464646;border:1px solid #686868;border-radius:2px;"></div>
<div class="t pt" style="left:1188px;top:146px;font-size:10.4px;color:#f0f0f0;letter-spacing:-0.35px">73,5 mm</div>
<div class="t pt" style="left:1088px;top:171px;font-size:11px;-webkit-text-stroke:0.3px #e8e8e8">Y:</div>
<div class="a" style="left:1102px;top:165px;width:55px;height:20px;background:#464646;border:1px solid #686868;border-radius:2px;"></div>
<div class="t pt" style="left:1107px;top:171px;font-size:10.4px;color:#f0f0f0;letter-spacing:-0.35px">71,667 mm</div>
<div class="t pt" style="left:1169px;top:171px;font-size:11px;-webkit-text-stroke:0.3px #e8e8e8">H:</div>
<div class="a" style="left:1183px;top:165px;width:55px;height:20px;background:#464646;border:1px solid #686868;border-radius:2px;"></div>
<div class="t pt" style="left:1187px;top:171px;font-size:10.4px;color:#f0f0f0;letter-spacing:-0.35px">66,667 mm</div>
<svg class="a" style="left:1246px;top:155px" width="14" height="15" viewBox="0 0 14 15"><path d="M4 3 L7 1.5 L10.5 8 M3.5 7 L7 13.5 L10 12" fill="none" stroke="#c8c8c8" stroke-width="1.6"/><path d="M1 1 L13 14" stroke="#c8c8c8" stroke-width="1.3"/></svg>
<svg class="a" style="left:1252px;top:198px" width="16" height="6" viewBox="0 0 16 6"><circle cx="2.5" cy="3" r="2.2" fill="#c8c8c8"/><circle cx="8" cy="3" r="2.2" fill="#c8c8c8"/><circle cx="13.5" cy="3" r="2.2" fill="#c8c8c8"/></svg>
<div class="a" style="left:1032px;top:214px;width:240px;height:1px;background:#474747"></div>
<div class="t pt" style="left:1044px;top:228px;">Textformat</div>
<div class="a" style="left:1043px;top:247px;width:219px;height:21px;background:#4a4a4a;border:1px solid #686868;border-radius:2px"></div>
<div class="a" style="left:1044px;top:248px;width:108px;height:19px;background:#2e2e2e"></div>
<div class="t pt" style="left:1065px;top:254px;color:#5b9de6;letter-spacing:-0.7px">Absatzformate</div>
<div class="t pt" style="left:1172px;top:254px;color:#f0f0f0;letter-spacing:-0.6px">Zeichenformate</div>
<div class="a" style="left:1043px;top:276px;width:220px;height:35px;background:#474747;border:1px solid #686868;border-radius:2px;"></div>
<div class="a" style="left:1243px;top:277px;width:1px;height:33px;background:#656565"></div>
<div class="t pt" style="left:1050px;top:289px;color:#f0f0f0;letter-spacing:-0.55px">(Gemischt)</div>
<svg class="a" style="left:1248px;top:291px" width="9" height="6" viewBox="0 0 9 6"><path d="M0.7 0.7 L4.5 4.5 L8.3 0.7" stroke="#d0d0d0" stroke-width="1.2" fill="none"/></svg>
<svg class="a" style="left:1049px;top:323px" width="16" height="12" viewBox="0 0 16 12"><path d="M4 1 H10 M6.5 1 V11 M9 1 V11" stroke="#c8c8c8" stroke-width="1.5"/><circle cx="4" cy="4" r="3" fill="#c8c8c8"/><path d="M11.5 10 L13 11.5 L14.5 10" stroke="#c8c8c8" stroke-width="1" fill="none"/></svg>
<svg class="a" style="left:1174px;top:320px" width="18" height="14" viewBox="0 0 18 14"><path d="M4.5 4.5 V1 H12 V5 M8.5 9.5 V13 H16.5 V5 H12" fill="none" stroke="#8c8c8c" stroke-width="1.3"/><path d="M0.5 7 H8 M5.5 4.5 L8 7 L5.5 9.5" stroke="#8c8c8c" stroke-width="1.4" fill="none"/></svg>
<svg class="a" style="left:1211px;top:321px" width="17" height="13" viewBox="0 0 17 13"><path d="M4 1.5 H10 M6.5 1.5 V12 M9 1.5 V12" stroke="#c8c8c8" stroke-width="1.5"/><circle cx="4" cy="4.5" r="3" fill="#c8c8c8"/><path d="M10.5 10 L16 3.5 M12 4.5 L15.5 8.5" stroke="#c8c8c8" stroke-width="1.1"/><path d="M14 2 L16.5 1 L15.5 3.5Z" fill="#c8c8c8"/></svg>
<svg class="a" style="left:1246px;top:323px" width="11" height="11" viewBox="0 0 11 11"><rect x="0.6" y="0.6" width="9.8" height="9.8" fill="none" stroke="#d0d0d0" stroke-width="1.2"/><path d="M5.5 2.5 V8.5 M2.5 5.5 H8.5" stroke="#d0d0d0" stroke-width="1.2"/></svg>
<div class="a" style="left:1032px;top:345px;width:240px;height:1px;background:#474747"></div>
<div class="t pt" style="left:1043px;top:361px;letter-spacing:-0.75px">Aussehen</div>
<svg class="a" style="left:1043px;top:380px" width="18" height="17" viewBox="0 0 18 17"><rect x="0" y="0" width="17" height="17" fill="#f4f4f4"/><path d="M0.5 16.5 L16.5 0.5" stroke="#cc1f2a" stroke-width="2"/></svg>
<div class="t pt" style="left:1071px;top:386px;letter-spacing:-0.8px;color:#f0f0f0">Fläche</div>
<svg class="a" style="left:1043px;top:406px" width="18" height="17" viewBox="0 0 18 17"><rect x="1.5" y="1.5" width="14" height="14" fill="#555" stroke="#f4f4f4" stroke-width="3"/><path d="M2.5 14.5 L14.5 2.5" stroke="#cc1f2a" stroke-width="2.6"/></svg>
<div class="t pt" style="left:1071px;top:412px;letter-spacing:-0.5px;color:#f0f0f0;text-decoration:underline">Kontur&nbsp;</div>
<div class="a" style="left:1133px;top:405px;width:17px;height:20px;background:#595959;border:1px solid #656565;border-radius:2px 0 0 2px"></div>
<svg class="a" style="left:1137px;top:405px" width="10" height="20" viewBox="0 0 10 20"><path d="M1 7.5 L5 3.5 L9 7.5 M1 12.5 L5 16.5 L9 12.5" stroke="#8a8a8a" stroke-width="1" fill="none"/></svg>
<div class="a" style="left:1150px;top:405px;width:53px;height:20px;background:#484848;border:1px solid #656565;border-radius:0 2px 2px 0"></div>
<div class="a" style="left:1184px;top:406px;width:1px;height:18px;background:#656565"></div>
<svg class="a" style="left:1189px;top:413px" width="9" height="6" viewBox="0 0 9 6"><path d="M0.7 0.7 L4.5 4.5 L8.3 0.7" stroke="#d0d0d0" stroke-width="1.2" fill="none"/></svg>
<div class="a" style="left:1208px;top:405px;width:55px;height:20px;background:#444;border:1px solid #656565;border-radius:2px"></div>
<div class="a" style="left:1208px;top:405px;width:36px;height:20px;background:#e6e6e6"></div>
<div class="a" style="left:1213px;top:412px;width:28px;height:8px;background:#000"></div>
<svg class="a" style="left:1249px;top:413px" width="9" height="6" viewBox="0 0 9 6"><path d="M0.7 0.7 L4.5 4.5 L8.3 0.7" stroke="#d0d0d0" stroke-width="1.2" fill="none"/></svg>
<svg class="a" style="left:1043px;top:432px" width="17" height="16" viewBox="0 0 17 16"><g fill="#4a8ad8"><rect x="0" y="0" width="4" height="4"/><rect x="13" y="0" width="4" height="4"/><rect x="0" y="12" width="4" height="4"/><rect x="13" y="12" width="4" height="4"/></g><path d="M5 2 H12 M5 14 H12 M2 5 V11 M15 5 V11" stroke="#4a8ad8" stroke-width="1" stroke-dasharray="1.5 1.5"/></svg>
<div class="t pt" style="left:1071px;top:438px;letter-spacing:-0.5px;color:#f0f0f0;text-decoration:underline">Ecke&nbsp;</div>
<div class="a" style="left:1133px;top:431px;width:17px;height:21px;background:#464646;border:1px solid #656565;border-radius:2px 0 0 2px"></div>
<svg class="a" style="left:1137px;top:431px" width="10" height="21" viewBox="0 0 10 21"><path d="M1 8.0 L5 4.0 L9 8.0 M1 13.0 L5 17.0 L9 13.0" stroke="#cfcfcf" stroke-width="1" fill="none"/></svg>
<div class="a" style="left:1150px;top:431px;width:53px;height:21px;background:#444;border:1px solid #656565;border-radius:0 2px 2px 0"></div>
<div class="t pt" style="left:1155px;top:437px;color:#f0f0f0;letter-spacing:-0.6px">4,233 mm</div>
<div class="a" style="left:1208px;top:431px;width:55px;height:21px;background:#444;border:1px solid #656565;border-radius:2px"></div>
<div class="a" style="left:1208px;top:431px;width:36px;height:21px;background:#e6e6e6"></div>
<svg class="a" style="left:1211px;top:434px" width="30" height="15" viewBox="0 0 30 15"><path d="M0 1 H28 V15" fill="none" stroke="#000" stroke-width="2"/></svg>
<svg class="a" style="left:1249px;top:439px" width="9" height="6" viewBox="0 0 9 6"><path d="M0.7 0.7 L4.5 4.5 L8.3 0.7" stroke="#d0d0d0" stroke-width="1.2" fill="none"/></svg>
<svg class="a" style="left:1044px;top:459px" width="15" height="14" viewBox="0 0 15 14"><rect x="0" y="0" width="15" height="14" fill="#d0d0d0"/><rect x="3" y="0" width="3" height="3" fill="#3e3e3e"/><rect x="9" y="0" width="3" height="3" fill="#3e3e3e"/><rect x="0" y="3" width="3" height="3" fill="#3e3e3e"/><rect x="6" y="3" width="3" height="3" fill="#3e3e3e"/><rect x="12" y="3" width="3" height="3" fill="#3e3e3e"/><rect x="3" y="6" width="3" height="3" fill="#3e3e3e"/><rect x="9" y="6" width="3" height="3" fill="#3e3e3e"/><rect x="0" y="9" width="3" height="3" fill="#3e3e3e"/><rect x="6" y="9" width="3" height="3" fill="#3e3e3e"/><rect x="12" y="9" width="3" height="3" fill="#3e3e3e"/><rect x="3" y="12" width="3" height="3" fill="#3e3e3e"/><rect x="9" y="12" width="3" height="3" fill="#3e3e3e"/><rect x="0.5" y="0.5" width="14" height="13" fill="none" stroke="#c8c8c8" stroke-width="1"/></svg>
<div class="t pt" style="left:1071px;top:464px;letter-spacing:-0.5px;color:#f0f0f0;text-decoration:underline">Deckkraft&nbsp;</div>
<div class="a" style="left:1133px;top:457px;width:70px;height:21px;background:#444;border:1px solid #656565;border-radius:2px"></div>
<div class="a" style="left:1184px;top:458px;width:1px;height:19px;background:#656565"></div>
<div class="t pt" style="left:1138px;top:463px;color:#f0f0f0;letter-spacing:-0.6px">100 %</div>
<svg class="a" style="left:1191px;top:463px" width="6" height="9" viewBox="0 0 6 9"><path d="M0.8 0.8 L4.5 4.5 L0.8 8.2" stroke="#d0d0d0" stroke-width="1.2" fill="none"/></svg>
<svg class="a" style="left:1047px;top:489px" width="17" height="14" viewBox="0 0 17 14"><rect x="1" y="1" width="11" height="11" rx="1.5" fill="none" stroke="#c8c8c8" stroke-width="1.3"/><path d="M13.5 11.5 L15 13 L16.5 11.5" stroke="#c8c8c8" stroke-width="1" fill="none"/></svg>
<div class="t pt" style="left:1073px;top:488px;font-family:'Liberation Serif',serif;font-style:italic;font-size:14px;color:#c8c8c8">fx</div>
<svg class="a" style="left:1085px;top:500px" width="5" height="3" viewBox="0 0 5 3"><path d="M0.5 0.5 L2.5 2.5 L4.5 0.5" stroke="#c8c8c8" stroke-width="1" fill="none"/></svg>
<div class="a" style="left:1032px;top:513px;width:240px;height:1px;background:#474747"></div>
<div class="t pt" style="left:1043px;top:528px;letter-spacing:-0.7px">Zeichen</div>
<div class="a" style="left:1043px;top:546px;width:220px;height:21px;background:#474747;border:1px solid #686868;border-radius:2px;"></div>
<div class="a" style="left:1244px;top:547px;width:1px;height:19px;background:#656565"></div>
<svg class="a" style="left:1045px;top:550px" width="19" height="12" viewBox="0 0 19 12"><circle cx="4.5" cy="4.5" r="3.5" stroke="#c8c8c8" stroke-width="1.3" fill="none"/><path d="M7 7 L10.5 10.5 M12 4 L14.5 6.5 L17 4" stroke="#c8c8c8" stroke-width="1.3" fill="none"/></svg>
<svg class="a" style="left:1249px;top:553px" width="9" height="6" viewBox="0 0 9 6"><path d="M0.7 0.7 L4.5 4.5 L8.3 0.7" stroke="#d0d0d0" stroke-width="1.2" fill="none"/></svg>
<div class="a" style="left:1043px;top:572px;width:220px;height:21px;background:#474747;border:1px solid #686868;border-radius:2px;"></div>
<div class="a" style="left:1244px;top:573px;width:1px;height:19px;background:#656565"></div>
<svg class="a" style="left:1249px;top:579px" width="9" height="6" viewBox="0 0 9 6"><path d="M0.7 0.7 L4.5 4.5 L8.3 0.7" stroke="#d0d0d0" stroke-width="1.2" fill="none"/></svg>
<svg class="a" style="left:1042px;top:601px" width="20" height="15" viewBox="0 0 20 15"><path d="M0.5 7 H8.5 V8.5 M4.5 7 V14.5 M2.5 14.5 H6.5 M0.5 8.5 V7" stroke="#c8c8c8" stroke-width="1.6" fill="none"/><path d="M7 1 H19 V4 M13 1 V14 M10.5 14 H15.5 M7 4 V1" stroke="#c8c8c8" stroke-width="2" fill="none"/></svg>
<div class="a" style="left:1066px;top:599px;width:17px;height:19px;background:#595959;border:1px solid #656565;border-radius:2px 0 0 2px"></div>
<svg class="a" style="left:1070px;top:599px" width="10" height="19" viewBox="0 0 10 19"><path d="M1 7.0 L5 3.0 L9 7.0 M1 12.0 L5 16.0 L9 12.0" stroke="#8a8a8a" stroke-width="1" fill="none"/></svg>
<div class="a" style="left:1083px;top:599px;width:62px;height:19px;background:#474747;border:1px solid #656565;border-radius:0 2px 2px 0"></div>
<div class="a" style="left:1127px;top:600px;width:1px;height:17px;background:#656565"></div>
<svg class="a" style="left:1132px;top:606px" width="9" height="6" viewBox="0 0 9 6"><path d="M0.7 0.7 L4.5 4.5 L8.3 0.7" stroke="#d0d0d0" stroke-width="1.2" fill="none"/></svg>
<svg class="a" style="left:1160px;top:599px" width="18" height="18" viewBox="0 0 18 18"><path d="M6.5 7.5 L10 0.8 L13.5 7.5 M7.8 5 H12.2 M6.5 16.5 L10 9.8 L13.5 16.5 M7.8 14 H12.2" stroke="#c8c8c8" stroke-width="1.4" fill="none"/><path d="M5.5 8.5 H14.5" stroke="#c8c8c8" stroke-width="1.2"/><path d="M2 6 V15 M0.2 8 L2 5.5 L3.8 8 M0.2 13 L2 15.5 L3.8 13" stroke="#c8c8c8" stroke-width="1.3" fill="none"/></svg>
<div class="a" style="left:1183px;top:599px;width:17px;height:19px;background:#595959;border:1px solid #656565;border-radius:2px 0 0 2px"></div>
<svg class="a" style="left:1187px;top:599px" width="10" height="19" viewBox="0 0 10 19"><path d="M1 7.0 L5 3.0 L9 7.0 M1 12.0 L5 16.0 L9 12.0" stroke="#8a8a8a" stroke-width="1" fill="none"/></svg>
<div class="a" style="left:1200px;top:599px;width:62px;height:19px;background:#474747;border:1px solid #656565;border-radius:0 2px 2px 0"></div>
<div class="a" style="left:1244px;top:600px;width:1px;height:17px;background:#656565"></div>
<svg class="a" style="left:1249px;top:606px" width="9" height="6" viewBox="0 0 9 6"><path d="M0.7 0.7 L4.5 4.5 L8.3 0.7" stroke="#d0d0d0" stroke-width="1.2" fill="none"/></svg>
<svg class="a" style="left:1042px;top:625px" width="20" height="20" viewBox="0 0 20 20"><path d="M0.5 1.5 L4 12 L7.5 1.5 M6.5 12 L10 1.5 M9.5 12 L13.5 1.5 L17.5 12 M11 8.5 H16" stroke="#c8c8c8" stroke-width="1.4" fill="none"/><path d="M8 17 H17 M8 17 L10.5 15 M8 17 L10.5 19" stroke="#c8c8c8" stroke-width="1.2" fill="none"/></svg>
<div class="a" style="left:1066px;top:625px;width:17px;height:19px;background:#595959;border:1px solid #656565;border-radius:2px 0 0 2px"></div>
<svg class="a" style="left:1070px;top:625px" width="10" height="19" viewBox="0 0 10 19"><path d="M1 7.0 L5 3.0 L9 7.0 M1 12.0 L5 16.0 L9 12.0" stroke="#8a8a8a" stroke-width="1" fill="none"/></svg>
<div class="a" style="left:1083px;top:625px;width:62px;height:19px;background:#3c3c3c;border:1px solid #656565;border-radius:0 2px 2px 0"></div>
<div class="a" style="left:1127px;top:626px;width:1px;height:17px;background:#656565"></div>
<div class="t pt" style="left:1088px;top:630px;color:#f0f0f0;letter-spacing:-0.6px">Metrisch</div>
<svg class="a" style="left:1132px;top:632px" width="9" height="6" viewBox="0 0 9 6"><path d="M0.7 0.7 L4.5 4.5 L8.3 0.7" stroke="#d0d0d0" stroke-width="1.2" fill="none"/></svg>
<svg class="a" style="left:1159px;top:625px" width="20" height="19" viewBox="0 0 20 19"><rect x="0" y="0" width="19" height="11" fill="#c8c8c8"/><path d="M2 1.5 L5 10 L8 1.5 M8.5 10 L11.5 1.5 L14.5 10 M9.5 7.5 H13.5" stroke="#535353" stroke-width="1.4" fill="none"/><path d="M1 15.5 H18 M1 15.5 L3.5 13.5 M1 15.5 L3.5 17.5 M18 15.5 L15.5 13.5 M18 15.5 L15.5 17.5" stroke="#c8c8c8" stroke-width="1.2" fill="none"/></svg>
<div class="a" style="left:1183px;top:625px;width:17px;height:19px;background:#595959;border:1px solid #656565;border-radius:2px 0 0 2px"></div>
<svg class="a" style="left:1187px;top:625px" width="10" height="19" viewBox="0 0 10 19"><path d="M1 7.0 L5 3.0 L9 7.0 M1 12.0 L5 16.0 L9 12.0" stroke="#8a8a8a" stroke-width="1" fill="none"/></svg>
<div class="a" style="left:1200px;top:625px;width:62px;height:19px;background:#474747;border:1px solid #656565;border-radius:0 2px 2px 0"></div>
<div class="a" style="left:1244px;top:626px;width:1px;height:17px;background:#656565"></div>
<svg class="a" style="left:1249px;top:632px" width="9" height="6" viewBox="0 0 9 6"><path d="M0.7 0.7 L4.5 4.5 L8.3 0.7" stroke="#d0d0d0" stroke-width="1.2" fill="none"/></svg>
<svg class="a" style="left:1252px;top:658px" width="16" height="6" viewBox="0 0 16 6"><circle cx="2.5" cy="3" r="2.2" fill="#c8c8c8"/><circle cx="8" cy="3" r="2.2" fill="#c8c8c8"/><circle cx="13.5" cy="3" r="2.2" fill="#c8c8c8"/></svg>
<div class="a" style="left:1032px;top:673px;width:240px;height:1px;background:#474747"></div>
<div class="t pt" style="left:1043px;top:688px;letter-spacing:-0.65px">Absatz</div>
<div class="a" style="left:1068px;top:708px;width:22px;height:22px;background:#2e2e2e;border-radius:2px"></div>
<svg class="a" style="left:1048px;top:711px" width="16" height="15" viewBox="0 0 16 15"><path d="M0 1.5 H15 M0 4.5 H10 M0 7.5 H15 M0 10.5 H10 M0 13.5 H15" stroke="#d0d0d0" stroke-width="1.1"/></svg>
<svg class="a" style="left:1071px;top:711px" width="16" height="15" viewBox="0 0 16 15"><path d="M0 1.5 H15 M2.5 4.5 H12.5 M0 7.5 H15 M2.5 10.5 H12.5 M0 13.5 H15" stroke="#d0d0d0" stroke-width="1.1"/></svg>
<svg class="a" style="left:1094px;top:711px" width="16" height="15" viewBox="0 0 16 15"><path d="M0 1.5 H15 M5 4.5 H15 M0 7.5 H15 M5 10.5 H15 M0 13.5 H15" stroke="#d0d0d0" stroke-width="1.1"/></svg>
<svg class="a" style="left:1121px;top:711px" width="16" height="15" viewBox="0 0 16 15"><path d="M0 1.5 H15 M0 4.5 H15 M0 7.5 H15 M0 10.5 H15 M0 13.5 H10" stroke="#d0d0d0" stroke-width="1.1"/></svg>
<svg class="a" style="left:1145px;top:711px" width="16" height="15" viewBox="0 0 16 15"><path d="M0 1.5 H15 M0 4.5 H15 M0 7.5 H15 M0 10.5 H15 M2.5 13.5 H12.5" stroke="#d0d0d0" stroke-width="1.1"/></svg>
<svg class="a" style="left:1169px;top:711px" width="16" height="15" viewBox="0 0 16 15"><path d="M0 1.5 H15 M0 4.5 H15 M0 7.5 H15 M0 10.5 H15 M5 13.5 H15" stroke="#d0d0d0" stroke-width="1.1"/></svg>
<svg class="a" style="left:1193px;top:711px" width="16" height="15" viewBox="0 0 16 15"><path d="M0 1.5 H15 M0 4.5 H15 M0 7.5 H15 M0 10.5 H15 M0 13.5 H15" stroke="#d0d0d0" stroke-width="1.1"/></svg>
<svg class="a" style="left:1219px;top:711px" width="16" height="15" viewBox="0 0 16 15"><path d="M0 1.5 H11 M4 4.5 H11 M0 7.5 H11 M4 10.5 H11 M0 13.5 H11" stroke="#d0d0d0" stroke-width="1.1"/><path d="M14 0 V15" stroke="#c8c8c8" stroke-width="1.3"/></svg>
<svg class="a" style="left:1243px;top:711px" width="16" height="15" viewBox="0 0 16 15"><path d="M0 1.5 H11 M4 4.5 H11 M0 7.5 H11 M4 10.5 H11 M0 13.5 H11" stroke="#d0d0d0" stroke-width="1.1"/><path d="M14 0 V15" stroke="#c8c8c8" stroke-width="1.3"/></svg>
<!-- END PANEL -->
<div class="a" style="left:1287px;top:34px;width:2px;height:702px;background:#555"></div>
<div class="a" style="left:1289px;top:3px;width:2px;height:736px;background:#383838"></div>
<div class="a" style="left:0;top:0;width:3px;height:2px;background:#fff"></div>
<div class="a" style="left:1287px;top:0;width:4px;height:3px;background:#fff"></div>
</body></html>
